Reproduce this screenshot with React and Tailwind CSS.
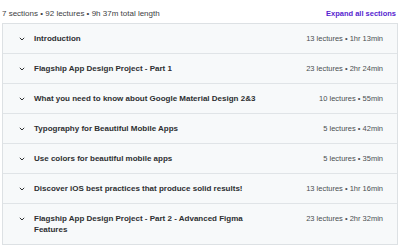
const sections = [
  { title: 'Introduction', meta: '13 lectures • 1hr 13min' },
  { title: 'Flagship App Design Project - Part 1', meta: '23 lectures • 2hr 24min' },
  { title: 'What you need to know about Google Material Design 2&3', meta: '10 lectures • 55min' },
  { title: 'Typography for Beautiful Mobile Apps', meta: '5 lectures • 42min' },
  { title: 'Use colors for beautiful mobile apps', meta: '5 lectures • 35min' },
  { title: 'Discover iOS best practices that produce solid results!', meta: '13 lectures • 1hr 16min' },
  { title: 'Flagship App Design Project - Part 2 - Advanced Figma Features', meta: '23 lectures • 2hr 32min' },
];

function Chevron() {
  return (
    <svg width="6" height="4" viewBox="0 0 6 4" className="shrink-0 mt-[4px]">
      <path d="M0.8 0.8 L3 3 L5.2 0.8" fill="none" stroke="#2d2f31" strokeWidth="1" />
    </svg>
  );
}

export default function App() {
  return (
    <div className="w-[400px] h-[246px] bg-white text-[#2d2f31] font-['Liberation_Sans',Arial,sans-serif] overflow-hidden">
      <div className="flex items-center justify-between pl-[2px] pr-[4px] pt-[9px] pb-[4px]">
        <span className="text-[8px] leading-[10px] text-[#3e4143]">7 sections • 92 lectures • 9h 37m total length</span>
        <button className="text-[7.5px] leading-[10px] font-bold text-[#5624d0]">Expand all sections</button>
      </div>
      <div className="mx-[2px] border border-[#dde1e4]">
        {sections.map((s, i) => (
          <div
            key={i}
            className={
              'flex items-start gap-[9px] bg-[#f7f9fa] pl-[16px] pr-[14px] py-[9px] ' +
              (i > 0 ? 'border-t border-[#e0e4e7]' : '')
            }
          >
            <Chevron />
            <div className="flex-1 min-w-0 pr-[24px] text-[8px] leading-[11px] font-bold">{s.title}</div>
            <div className="shrink-0 text-[7.5px] leading-[11px] text-[#4b4f52]">{s.meta}</div>
          </div>
        ))}
      </div>
    </div>
  );
}
